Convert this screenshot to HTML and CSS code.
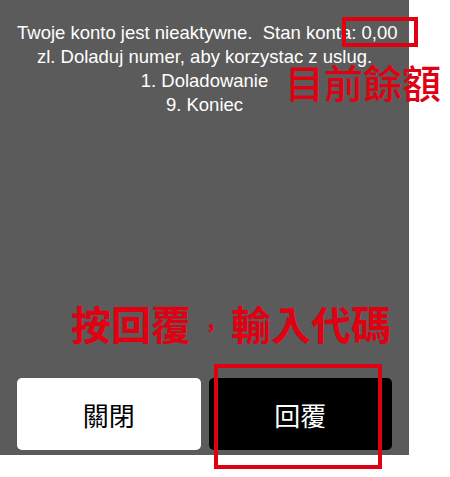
FILE: index.html
```html
<!DOCTYPE html>
<html>
<head>
<meta charset="utf-8">
<link rel="stylesheet" href="styles.css">
</head>
<body>
<div class="panel">
  <div class="message">
    <p>Twoje konto jest nieaktywne.&nbsp; Stan konta: 0,00</p>
    <p>zl. Doladuj numer, aby korzystac z uslug.</p>
    <p>1. Doladowanie</p>
    <p>9. Koniec</p>
  </div>
  <div class="spacer"></div>
  <div class="buttons">
    <button class="btn btn-close">關閉</button>
    <button class="btn btn-reply">回覆</button>
  </div>
</div>
<div class="mark mark-balance"></div>
<div class="note note-balance">目前餘額</div>
<div class="note note-reply">按回覆<span class="comma">，</span>輸入代碼</div>
<div class="mark mark-reply"></div>
</body>
</html>
```
FILE: styles.css
```css
html, body {
  margin: 0;
  padding: 0;
  background: #ffffff;
}
body {
  position: relative;
  width: 450px;
  height: 477px;
  overflow: hidden;
  font-family: "Liberation Sans", "Noto Sans CJK TC", sans-serif;
}
.panel {
  width: 409px;
  height: 455px;
  background: #5b5b5b;
  display: flex;
  flex-direction: column;
  box-sizing: border-box;
  padding: 21px 17px 5px;
}
.message {
  color: #ffffff;
  font-size: 18.5px;
  line-height: 24px;
  text-align: center;
}
.message p {
  margin: 0;
  white-space: nowrap;
}
.spacer {
  flex: 1;
}
.buttons {
  display: flex;
  gap: 8px;
}
.btn {
  flex: 1;
  height: 72px;
  border: none;
  border-radius: 5px;
  font-family: "Noto Sans CJK TC", sans-serif;
  font-size: 26px;
  padding: 0;
}
.btn-close {
  background: #ffffff;
  color: #000000;
}
.btn-reply {
  background: #000000;
  color: #ffffff;
}
.mark {
  position: absolute;
  border: 4px solid #e00012;
  box-sizing: border-box;
}
.mark-balance {
  left: 342px;
  top: 17px;
  width: 76px;
  height: 30px;
}
.mark-reply {
  left: 214px;
  top: 364px;
  width: 168px;
  height: 105px;
}
.note {
  position: absolute;
  color: #e00012;
  font-family: "Noto Sans CJK TC", sans-serif;
  white-space: nowrap;
  line-height: 1;
}
.note-balance {
  left: 285px;
  top: 62px;
  font-size: 39px;
  font-weight: 500;
}
.note-reply {
  left: 71px;
  top: 303px;
  font-size: 40px;
  font-weight: 700;
}
.comma {
  display: inline-block;
  width: 40px;
  text-align: center;
  font-size: 22px;
  vertical-align: 4px;
}
```
